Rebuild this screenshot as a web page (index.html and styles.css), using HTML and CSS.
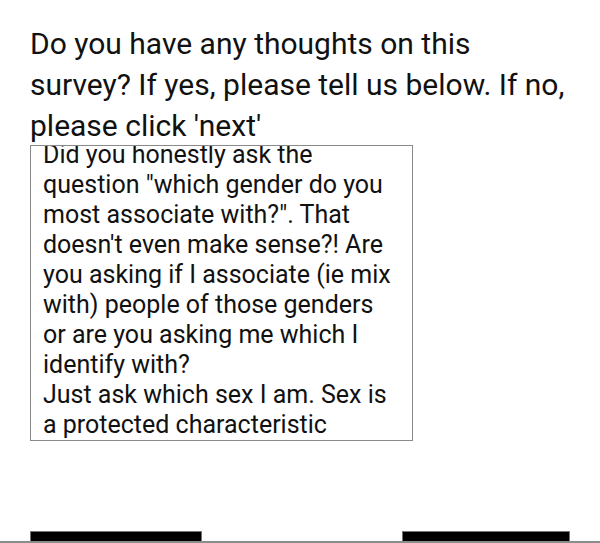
FILE: index.html
```html
<!DOCTYPE html>
<html>
<head>
<meta charset="utf-8">
<link rel="stylesheet" href="styles.css">
</head>
<body>
<div class="page">
  <div class="question">
    <h1 class="q-title">Do you have any thoughts on this<br>survey? If yes, please tell us below. If no, please click 'next'</h1>
    <div class="answer">
      <div class="answer-text">Did you honestly ask the question "which gender do you most associate with?". That doesn't even make sense?! Are you asking if I associate (ie mix with) people of those genders or are you asking me which I identify with?<br>Just ask which sex I am. Sex is a protected characteristic</div>
    </div>
  </div>
  <div class="spacer"></div>
  <div class="nav">
    <div class="btn"></div>
    <div class="btn btn-next"></div>
  </div>
  <div class="footer-line"></div>
</div>
</body>
</html>
```
FILE: styles.css
```css
html, body {
  margin: 0;
  padding: 0;
  background: #ffffff;
}
.page {
  height: 543px;
  display: flex;
  flex-direction: column;
  overflow: hidden;
  font-family: Roboto, "Liberation Sans", sans-serif;
  color: #111;
}
.question {
  padding: 23px 30px 0 30px;
}
.q-title {
  margin: 0;
  font-size: 30px;
  font-weight: 400;
  line-height: 41px;
  width: 560px;
}
.answer {
  margin-top: -1px;
  border: 1px solid #8a8a8a;
  display: flex;
  flex-direction: column;
  justify-content: flex-end;
  overflow: hidden;
  padding: 0 15px 0 12px;
  box-sizing: content-box;
  width: 354px;
  height: 294px;
}
.answer-text {
  font-size: 25px;
  line-height: 30px;
  color: #111;
}
.spacer {
  flex: 1;
}
.nav {
  display: flex;
  justify-content: space-between;
  padding: 0 30px;
  height: 10px;
}
.btn {
  width: 170px;
  background: #000;
  border: 1px solid #777;
  border-bottom: none;
}
.btn-next {
  width: 166px;
}
.footer-line {
  height: 2px;
  background: #8c8c8c;
}
```
